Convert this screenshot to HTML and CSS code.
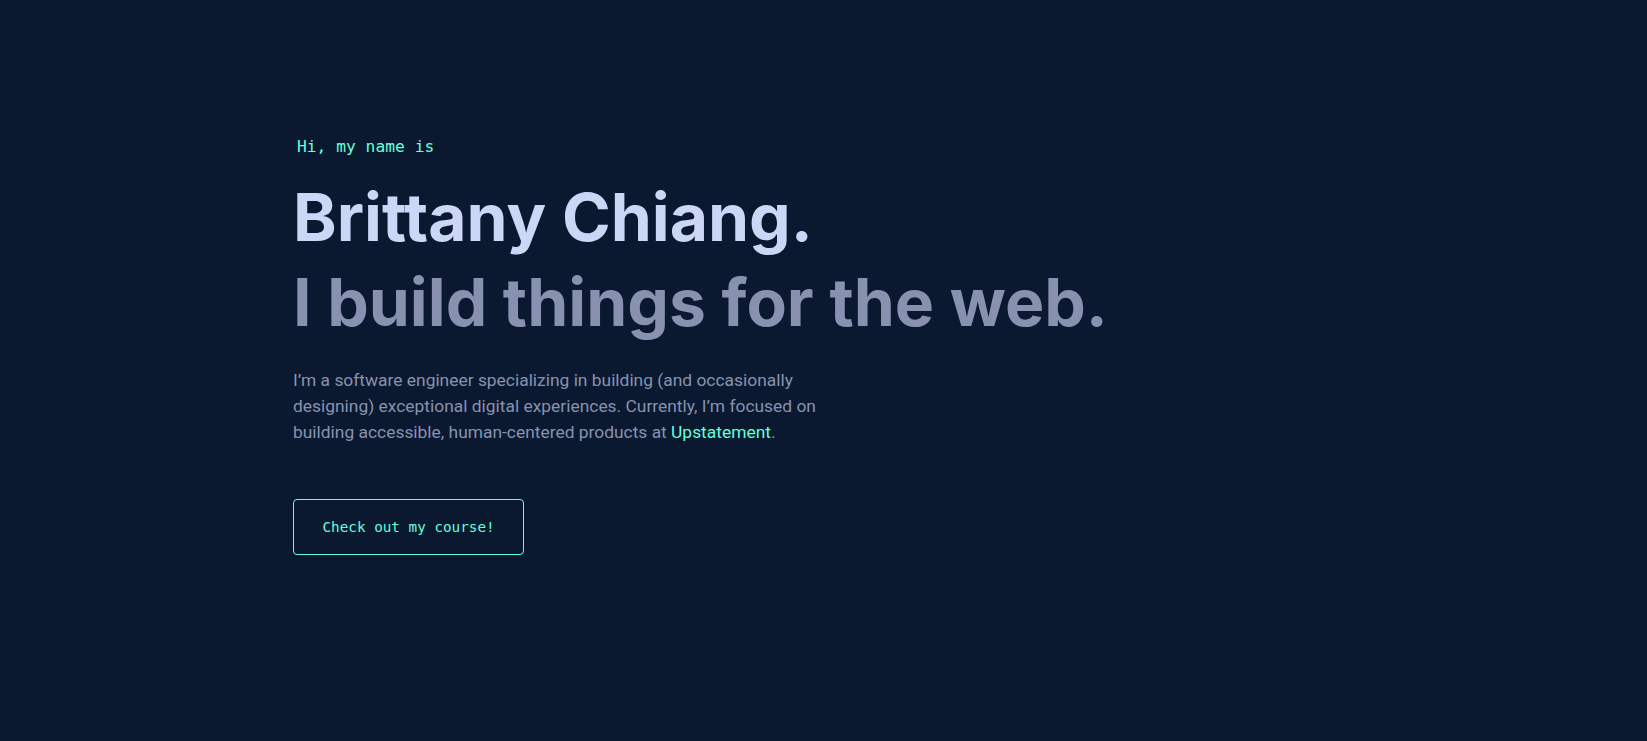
FILE: index.html
```html
<!DOCTYPE html>
<html lang="en">
<head>
<meta charset="utf-8">
<title>Brittany Chiang</title>
<link rel="stylesheet" href="styles.css">
</head>
<body>
<main class="hero">
  <h1 class="intro">Hi, my name is</h1>
  <h2 class="name">Brittany Chiang.</h2>
  <h3 class="tagline">I build things for the web.</h3>
  <div class="bio">
    <p>I’m a software engineer specializing in building (and occasionally designing) exceptional digital experiences. Currently, I’m focused on building accessible, human-centered products at <a class="link" href="#">Upstatement</a>.</p>
  </div>
  <a class="cta" href="#">Check out my course!</a>
</main>
</body>
</html>
```

FILE: styles.css
```css
html, body {
  margin: 0;
  padding: 0;
  background: #0a192f;
  height: 100%;
}
body {
  font-family: "Inter", "Roboto", sans-serif;
  color: #8892b0;
}
.hero {
  box-sizing: border-box;
  min-height: 741px;
  padding: 139px 0 0 293px;
  display: flex;
  flex-direction: column;
  align-items: flex-start;
}
.intro {
  margin: 0 0 25px 4px;
  font-family: "DejaVu Sans Mono", "Liberation Mono", monospace;
  font-size: 16.3px;
  font-weight: 400;
  line-height: 16px;
  color: #64ffda;
}
.name, .tagline {
  margin: 0;
  font-family: "Inter", sans-serif;
  font-weight: 700;
  font-size: 66px;
  line-height: 75px;
  letter-spacing: 0;
  font-variant-ligatures: none;
  font-feature-settings: "liga" 0, "calt" 0, "dlig" 0;
}
.name {
  color: #ccd6f6;
}
.tagline {
  margin-top: 10px;
  color: #8892b0;
}
.bio {
  margin-top: 27px;
  width: 545px;
}
.bio p {
  margin: 0;
  font-family: "Roboto", sans-serif;
  font-size: 17.4px;
  line-height: 26px;
  color: #8892b0;
}
.link {
  color: #64ffda;
  text-decoration: none;
}
.cta {
  margin-top: 54px;
  padding: 20px 28.5px;
  border: 1px solid #64ffda;
  border-radius: 4px;
  font-family: "DejaVu Sans Mono", "Liberation Mono", monospace;
  font-size: 14.3px;
  line-height: 14px;
  color: #64ffda;
  text-decoration: none;
}
```
